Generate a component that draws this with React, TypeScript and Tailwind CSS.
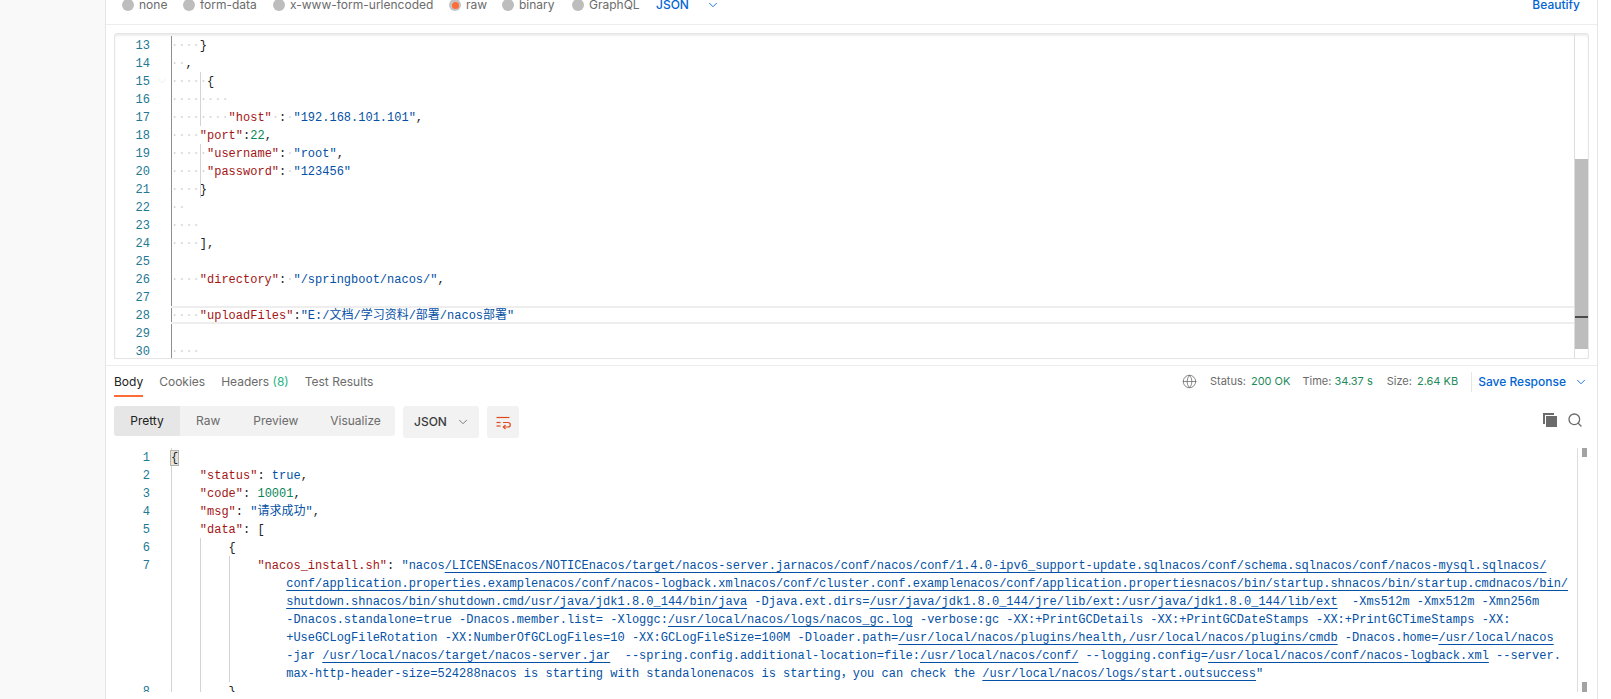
import type { ReactNode } from 'react'
import { ChevronDown, Globe, Search } from 'lucide-react'

const inter = 'font-["Inter","Liberation_Sans",sans-serif]'
const mono = 'font-["Liberation_Mono","Noto_Sans_CJK_SC",monospace]'

const K = ({ children }: { children: ReactNode }) => <span className="text-[#a31515]">{children}</span>
const S = ({ children }: { children: ReactNode }) => <span className="text-[#0451a5]">{children}</span>
const N = ({ children }: { children: ReactNode }) => <span className="text-[#098658]">{children}</span>
const D = ({ n }: { n: number }) => <span className="text-[#d4d4d4]">{'·'.repeat(n)}</span>
const U = ({ children }: { children: ReactNode }) => (
    <span className="text-[#0451a5] underline decoration-[#0451a5] underline-offset-[3px]">{children}</span>
)

const Radio = ({ label, width, active }: { label: string; width: string; active?: boolean }) => (
    <div className={`flex items-center gap-[5px] ${width}`}>
        <span className={`flex h-3 w-3 items-center justify-center rounded-full ${active ? 'bg-[#c4c4c4]' : 'bg-[#bdbdbd]'}`}>
            {active && <span className="h-[7px] w-[7px] rounded-full bg-[#ff6c37]" />}
        </span>
        <span className="text-[12px] text-[#6b6b6b]">{label}</span>
    </div>
)

type Row = { no: number; code?: ReactNode; guide?: boolean; current?: boolean; fold?: boolean }

const requestRows: Row[] = [
    { no: 13, code: <><D n={4} />{'}'}</> },
    { no: 14, code: <><D n={2} />,</> },
    { no: 15, guide: true, fold: true, code: <><D n={5} />{'{'}</> },
    { no: 16, guide: true, code: <D n={8} /> },
    { no: 17, guide: true, code: <><D n={8} /><K>"host"</K><D n={1} />:<D n={1} /><S>"192.168.101.101"</S>,</> },
    { no: 18, code: <><D n={4} /><K>"port"</K>:<N>22</N>,</> },
    { no: 19, guide: true, code: <><D n={5} /><K>"username"</K>:<D n={1} /><S>"root"</S>,</> },
    { no: 20, guide: true, code: <><D n={5} /><K>"password"</K>:<D n={1} /><S>"123456"</S></> },
    { no: 21, guide: true, code: <><D n={4} />{'}'}</> },
    { no: 22, code: <D n={2} /> },
    { no: 23, code: <D n={4} /> },
    { no: 24, code: <><D n={4} />],</> },
    { no: 25 },
    { no: 26, code: <><D n={4} /><K>"directory"</K>:<D n={1} /><S>"/springboot/nacos/"</S>,</> },
    { no: 27 },
    { no: 28, current: true, code: <><D n={4} /><K>"uploadFiles"</K>:<S>"E:/文档/学习资料/部署/nacos部署"</S></> },
    { no: 29 },
    { no: 30, code: <D n={4} /> },
]

const wrapped: ReactNode[] = [
    <U>conf/application.properties.examplenacos/conf/nacos-logback.xmlnacos/conf/cluster.conf.examplenacos/conf/application.propertiesnacos/bin/startup.shnacos/bin/startup.cmdnacos/bin/</U>,
    <><U>shutdown.shnacos/bin/shutdown.cmd/usr/java/jdk1.8.0_144/bin/java</U><S> -Djava.ext.dirs=</S><U>/usr/java/jdk1.8.0_144/jre/lib/ext:/usr/java/jdk1.8.0_144/lib/ext</U><S>  -Xms512m -Xmx512m -Xmn256m</S></>,
    <><S>-Dnacos.standalone=true -Dnacos.member.list= -Xloggc:</S><U>/usr/local/nacos/logs/nacos_gc.log</U><S> -verbose:gc -XX:+PrintGCDetails -XX:+PrintGCDateStamps -XX:+PrintGCTimeStamps -XX:</S></>,
    <><S>+UseGCLogFileRotation -XX:NumberOfGCLogFiles=10 -XX:GCLogFileSize=100M -Dloader.path=</S><U>/usr/local/nacos/plugins/health,/usr/local/nacos/plugins/cmdb</U><S> -Dnacos.home=</S><U>/usr/local/nacos</U></>,
    <><S>-jar </S><U>/usr/local/nacos/target/nacos-server.jar</U><S>  --spring.config.additional-location=file:</S><U>/usr/local/nacos/conf/</U><S> --logging.config=</S><U>/usr/local/nacos/conf/nacos-logback.xml</U><S> --server.</S></>,
    <><S>max-http-header-size=524288nacos is starting with standalonenacos is starting，you can check the </S><U>/usr/local/nacos/logs/start.outsuccess</U><S>"</S></>,
]

const WrapIcon = () => (
    <svg width="16" height="16" viewBox="0 0 16 16" fill="none" stroke="#e0491f" strokeWidth="1.2">
        <path d="M1.5 3.5h13" />
        <path d="M1.5 12h4" />
        <path d="M8 8.5h5a2 2 0 0 1 0 4.5H8.5" />
        <path d="M10.5 11l-2.2 2 2.2 2" />
        <path d="M1.5 8.5h4" />
    </svg>
)

const CopyIcon = () => (
    <svg width="16" height="16" viewBox="0 0 16 16" fill="#6b6b6b">
        <path d="M1 1h11v2H3v9H1z" />
        <rect x="4" y="4" width="11" height="11" />
    </svg>
)

const App = () => {
    return (
        <div className={`flex h-[699px] w-[1611px] overflow-hidden bg-white text-[12px] ${inter}`}>
            <aside className="w-[106px] shrink-0 border-r border-[#e6e6e6] bg-[#f9f9f9]" />

            <main className="flex w-[1492px] shrink-0 flex-col border-r border-[#e6e6e6]">
                {/* Body type row, cut off by the top of the picture */}
                <div className="flex h-[25px] shrink-0 border-b border-[#ededed] pl-[16px] pr-[17px]">
                    <div className="-mt-[3px] flex h-4 w-full items-center">
                        <Radio label="none" width="w-[61px]" />
                        <Radio label="form-data" width="w-[90px]" />
                        <Radio label="x-www-form-urlencoded" width="w-[176px]" />
                        <Radio label="raw" width="w-[53px]" active />
                        <Radio label="binary" width="w-[70px]" />
                        <Radio label="GraphQL" width="w-[84px]" />
                        <span className="font-medium text-[#0265d2]">JSON</span>
                        <ChevronDown className="ml-[17px] h-[14px] w-[14px] text-[#0265d2]" strokeWidth={1.5} />
                        <span className="ml-auto font-medium text-[#0265d2]">Beautify</span>
                    </div>
                </div>

                {/* Request editor */}
                <div className="mx-2 mt-2 flex h-[326px] shrink-0 flex-row overflow-hidden rounded-t-[3px] border border-[#e4e4e4] shadow-[inset_0_2px_2px_#eeeeee]">
                    <div className={`min-w-0 flex-1 overflow-hidden pt-[2px] text-[12px] leading-[20px] text-[#222222] ${mono}`}>
                        {requestRows.map((row) => (
                            <div key={row.no} className="flex h-[18px]">
                                <div className="relative w-[56px] shrink-0 pr-[21px] text-right text-[#237893]">
                                    {row.no}
                                    {row.fold && <ChevronDown className="absolute right-[2px] top-[2px] h-[14px] w-[14px] text-[#e4e4e4]" strokeWidth={1} />}
                                </div>
                                <div
                                    className={`relative flex-1 whitespace-pre shadow-[inset_1px_0_0_#8f8f8f] ${
                                        row.current ? 'border-y-2 border-[#eeeeee] leading-[16px]' : ''
                                    }`}
                                >
                                    {row.guide && <span className="absolute bottom-0 left-[29px] top-0 w-px bg-[#d3d3d3]" />}
                                    {row.code}
                                </div>
                            </div>
                        ))}
                    </div>
                    <div className="flex w-[14px] shrink-0 flex-col border-l border-[#dddddd]">
                        <div className="h-[125px] shrink-0" />
                        <div className="relative h-[190px] shrink-0 bg-[#bdbdbd]">
                            <span className="absolute left-0 right-0 top-[157px] h-[2px] bg-[#4a4a4a]" />
                        </div>
                    </div>
                </div>

                {/* Response tabs */}
                <div className="mt-[6px] flex h-[32px] shrink-0 items-stretch border-t border-[#ededed] pl-2 pr-[9px]">
                    <div className="flex border-b-2 border-[#ff6c37] pt-[7px] text-[#212121]">Body</div>
                    <div className="ml-4 pt-[7px] text-[#6b6b6b]">Cookies</div>
                    <div className="ml-4 pt-[7px] text-[#6b6b6b]">
                        Headers <span className="text-[#26b47f]">(8)</span>
                    </div>
                    <div className="ml-4 pt-[7px] text-[#6b6b6b]">Test Results</div>
                    <div className="ml-auto flex items-center text-[#6b6b6b]">
                        <Globe className="h-[15px] w-[15px] text-[#6b6b6b]" strokeWidth={1.25} />
                        <span className="ml-[13px] text-[11px]">Status:</span>
                        <span className="ml-[5px] text-[11px] text-[#1f8a5c]">200 OK</span>
                        <span className="ml-[12px] text-[11px]">Time:</span>
                        <span className="ml-[3px] text-[11px] text-[#1f8a5c]">34.37 s</span>
                        <span className="ml-[14px] text-[11px]">Size:</span>
                        <span className="ml-[5px] text-[11px] text-[#1f8a5c]">2.64 KB</span>
                        <span className="ml-[13px] h-5 w-px bg-[#e6e6e6]" />
                        <span className="ml-[6px] font-medium text-[#0265d2]">Save Response</span>
                        <ChevronDown className="ml-[8px] h-[14px] w-[14px] text-[#0265d2]" strokeWidth={1.5} />
                    </div>
                </div>

                {/* Response toolbar */}
                <div className="mt-[9px] flex h-8 shrink-0 items-start pl-2 pr-[14px]">
                    <div className="flex h-[30px] w-[281px] items-center rounded-[3px] bg-[#f2f2f2] text-[#6b6b6b]">
                        <div className="flex h-full w-[66px] items-center justify-center rounded-l-[3px] bg-[#e6e6e6] text-[#212121]">Pretty</div>
                        <span className="ml-4">Raw</span>
                        <span className="ml-[33px]">Preview</span>
                        <span className="ml-[32px]">Visualize</span>
                    </div>
                    <div className="ml-2 flex h-8 w-[76px] items-center rounded-[3px] bg-[#f2f2f2] pl-[11px] font-medium text-[#3d3d3d]">
                        JSON
                        <ChevronDown className="ml-[9px] h-[14px] w-[14px] text-[#6b6b6b]" strokeWidth={1.5} />
                    </div>
                    <div className="ml-2 flex h-8 w-8 items-center justify-center rounded-[3px] bg-[#f2f2f2]">
                        <WrapIcon />
                    </div>
                    <div className="ml-auto mt-[6px] flex items-center gap-[9px]">
                        <CopyIcon />
                        <Search className="h-4 w-4 text-[#6b6b6b]" strokeWidth={2} />
                    </div>
                </div>

                {/* Response body */}
                <div className="mt-[10px] flex h-[244px] shrink-0 overflow-hidden pl-0 pr-[7px]">
                    <div className={`min-w-0 flex-1 overflow-hidden whitespace-pre text-[12px] leading-[20px] text-[#222222] ${mono}`}>
                        {[
                            { no: '1', lvl: 0, code: <span className="bg-[#e4e4dc] outline outline-1 outline-[#b5b5ad]">{'{'}</span> },
                            { no: '2', lvl: 0, code: <>{'    '}<K>"status"</K>: <S>true</S>,</> },
                            { no: '3', lvl: 0, code: <>{'    '}<K>"code"</K>: <N>10001</N>,</> },
                            { no: '4', lvl: 0, code: <>{'    '}<K>"msg"</K>: <S>"请求成功"</S>,</> },
                            { no: '5', lvl: 0, code: <>{'    '}<K>"data"</K>: [</> },
                            { no: '6', lvl: 1, code: <>{'        '}{'{'}</> },
                            { no: '7', lvl: 2, code: <>{'            '}<K>"nacos_install.sh"</K>: <S>"nacos</S><U>/LICENSEnacos/NOTICEnacos/target/nacos-server.jarnacos/conf/nacos/conf/1.4.0-ipv6_support-update.sqlnacos/conf/schema.sqlnacos/conf/nacos-mysql.sqlnacos/</U></> },
                            ...wrapped.map((code) => ({ no: '', lvl: 2, code: <>{'                '}{code}</> })),
                            { no: '8', lvl: 1, code: <>{'        '}{'}'}</> },
                        ].map((row, i) => (
                            <div key={i} className="flex h-[18px]">
                                <div className="w-[65px] shrink-0 pr-[21px] text-right text-[#237893]">{row.no}</div>
                                <div className="relative flex-1 shadow-[inset_1px_0_0_#d3d3d3]">
                                    {row.lvl > 0 && <span className="absolute bottom-0 left-[29px] top-0 w-px bg-[#d3d3d3]" />}
                                    {row.lvl > 1 && <span className="absolute bottom-0 left-[58px] top-0 w-px bg-[#d3d3d3]" />}
                                    {row.code}
                                </div>
                            </div>
                        ))}
                    </div>
                    <div className="flex w-[13px] shrink-0 flex-col items-center border-l border-[#dddddd]">
                        <span className="h-[9px] w-[5px] bg-[#a3a3a3]" />
                        <span className="mt-auto h-[10px] w-[5px] bg-[#a3a3a3]" />
                    </div>
                </div>
            </main>
        </div>
    )
}

export default App
